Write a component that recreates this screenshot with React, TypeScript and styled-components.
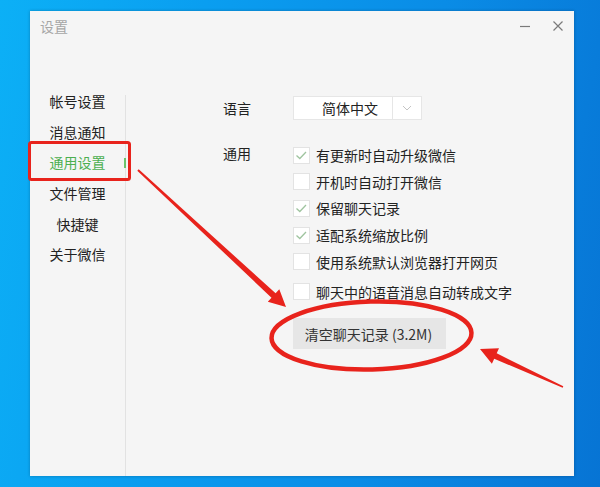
import React from "react";
import styled, { createGlobalStyle } from "styled-components";

const Global = createGlobalStyle`
  html, body { margin: 0; padding: 0; }
  body { font-family: "Noto Sans CJK SC", "Noto Sans", sans-serif; }
`;

const Desktop = styled.div`
  position: relative;
  width: 600px;
  height: 487px;
  overflow: hidden;
  box-sizing: border-box;
  padding: 11px 0 0 30px;
  background: linear-gradient(100deg, #0cb0f6 0%, #0a9ef0 30%, #0a8ce6 65%, #0774d4 100%);
`;

const Window = styled.div`
  width: 544px;
  height: 465px;
  background: #f5f5f5;
  display: flex;
  flex-direction: column;
  box-shadow: 0 0 3px rgba(0, 0, 0, 0.25);
`;

const TitleBar = styled.div`
  height: 32px;
  display: flex;
  align-items: center;
  padding-left: 10px;
  padding-right: 0px;
`;

const Title = styled.div`
  font-size: 14px;
  color: #a6a6a6;
  flex: 1;
  margin-top: -2px;
`;

const WinButton = styled.div`
  width: 33px;
  height: 24px;
  display: flex;
  align-items: center;
  justify-content: center;
  margin-top: -2px;
`;

const Body = styled.div`
  flex: 1;
  display: flex;
`;

const Sidebar = styled.div`
  width: 95px;
  padding-top: 43px;
  display: flex;
  flex-direction: column;
`;

const NavItem = styled.div<{ $active?: boolean }>`
  height: 30.6px;
  display: flex;
  align-items: center;
  justify-content: center;
  font-size: 14px;
  color: ${(p) => (p.$active ? "#4caf50" : "#222")};
`;

const Divider = styled.div`
  width: 1px;
  margin-top: 52px;
  background: #e2e2e2;
  position: relative;
`;

const Indicator = styled.div`
  position: absolute;
  left: -1px;
  top: 63px;
  width: 2px;
  height: 10px;
  background: #6cc46c;
`;

const Content = styled.div`
  flex: 1;
  padding: 53px 0 0 97px;
  display: flex;
  flex-direction: column;
`;

const Row = styled.div<{ $gap?: number }>`
  display: flex;
  align-items: flex-start;
  margin-top: ${(p) => p.$gap ?? 0}px;
`;

const Label = styled.div`
  width: 70px;
  font-size: 14px;
  color: #222;
  line-height: 24px;
`;

const Select = styled.div`
  width: 129px;
  height: 24px;
  box-sizing: border-box;
  border: 1px solid #e6e6e6;
  background: #fff;
  display: flex;
`;

const SelectText = styled.div`
  width: 99px;
  border-right: 1px solid #e6e6e6;
  font-size: 14px;
  color: #222;
  display: flex;
  align-items: center;
  justify-content: center;
  padding-left: 14px;
  box-sizing: border-box;
`;

const SelectArrow = styled.div`
  flex: 1;
  display: flex;
  align-items: center;
  justify-content: center;
`;

const Options = styled.div`
  display: flex;
  flex-direction: column;
  padding-top: 1px;
`;

const Option = styled.div<{ $gap?: number }>`
  height: 26.6px;
  margin-top: ${(p) => p.$gap ?? 0}px;
  display: flex;
  align-items: center;
  font-size: 14px;
  color: #222;
`;

const Box = styled.div`
  width: 17px;
  height: 17px;
  box-sizing: border-box;
  border: 1px solid #e3e3e3;
  background: #fff;
  margin-right: 6px;
  display: flex;
  align-items: center;
  justify-content: center;
`;

const ClearButton = styled.div`
  margin-top: 13px;
  margin-left: 70px;
  width: 153px;
  height: 31px;
  background: #e6e6e6;
  font-size: 14px;
  color: #333;
  display: flex;
  align-items: center;
  justify-content: center;
  padding-right: 2px;
  box-sizing: border-box;
`;

const Overlay = styled.svg`
  position: absolute;
  left: 0;
  top: 0;
  pointer-events: none;
`;

function arrowPoints(x1: number, y1: number, x2: number, y2: number, w0: number, w1: number, hl: number, hw: number) {
  const dx = x2 - x1;
  const dy = y2 - y1;
  const len = Math.hypot(dx, dy);
  const ux = dx / len;
  const uy = dy / len;
  const px = -uy;
  const py = ux;
  const bx = x2 - ux * hl;
  const by = y2 - uy * hl;
  const pts = [
    [x1 + px * w0, y1 + py * w0],
    [bx + px * w1, by + py * w1],
    [bx + px * hw, by + py * hw],
    [x2, y2],
    [bx - px * hw, by - py * hw],
    [bx - px * w1, by - py * w1],
    [x1 - px * w0, y1 - py * w0],
  ];
  return pts.map((p) => `${p[0].toFixed(1)},${p[1].toFixed(1)}`).join(" ");
}

const Check = () => (
  <svg width="13" height="13" viewBox="0 0 13 13">
    <path d="M1.5 6.5 L4.8 9.5 L11 3" fill="none" stroke="#9fc49f" strokeWidth="1.3" />
  </svg>
);

const options: { text: string; checked: boolean; gap?: number }[] = [
  { text: "有更新时自动升级微信", checked: true },
  { text: "开机时自动打开微信", checked: false },
  { text: "保留聊天记录", checked: true },
  { text: "适配系统缩放比例", checked: true },
  { text: "使用系统默认浏览器打开网页", checked: false },
  { text: "聊天中的语音消息自动转成文字", checked: false, gap: 3.5 },
];

const nav = ["帐号设置", "消息通知", "通用设置", "文件管理", "快捷键", "关于微信"];

export default function App() {
  const red = "#e8231c";
  return (
    <>
      <Global />
      <Desktop>
        <Window>
          <TitleBar>
            <Title>设置</Title>
            <WinButton>
              <svg width="12" height="12" viewBox="0 0 12 12">
                <path d="M1 6.5 H11" stroke="#7a7a7a" strokeWidth="1.2" />
              </svg>
            </WinButton>
            <WinButton>
              <svg width="12" height="12" viewBox="0 0 12 12">
                <path d="M1.5 1.5 L10.5 10.5 M10.5 1.5 L1.5 10.5" stroke="#7a7a7a" strokeWidth="1.2" />
              </svg>
            </WinButton>
          </TitleBar>
          <Body>
            <Sidebar>
              {nav.map((n) => (
                <NavItem key={n} $active={n === "通用设置"}>
                  {n}
                </NavItem>
              ))}
            </Sidebar>
            <Divider>
              <Indicator />
            </Divider>
            <Content>
              <Row>
                <Label>语言</Label>
                <Select>
                  <SelectText>简体中文</SelectText>
                  <SelectArrow>
                    <svg width="10" height="6" viewBox="0 0 10 6">
                      <path d="M1 1 L5 5 L9 1" fill="none" stroke="#c4c4c4" strokeWidth="1" />
                    </svg>
                  </SelectArrow>
                </Select>
              </Row>
              <Row $gap={21}>
                <Label>通用</Label>
                <Options>
                  {options.map((o) => (
                    <Option key={o.text} $gap={o.gap}>
                      <Box>{o.checked && <Check />}</Box>
                      {o.text}
                    </Option>
                  ))}
                </Options>
              </Row>
              <ClearButton>清空聊天记录 (3.2M)</ClearButton>
            </Content>
          </Body>
        </Window>
        <Overlay width="600" height="487" viewBox="0 0 600 487">
          <rect x="29.5" y="142.5" width="100" height="37" rx="2" fill="none" stroke={red} strokeWidth="3" />
          <ellipse cx="371.5" cy="335.5" rx="100" ry="34" fill="none" stroke={red} strokeWidth="4.5" transform="rotate(-1.5 371.5 335.5)" />
          <polygon points={arrowPoints(138, 170, 286, 307, 1, 3, 17, 8.5)} fill={red} />
          <polygon points={arrowPoints(563, 387, 480, 349, 0.8, 3, 17, 8.5)} fill={red} />
        </Overlay>
      </Desktop>
    </>
  );
}
